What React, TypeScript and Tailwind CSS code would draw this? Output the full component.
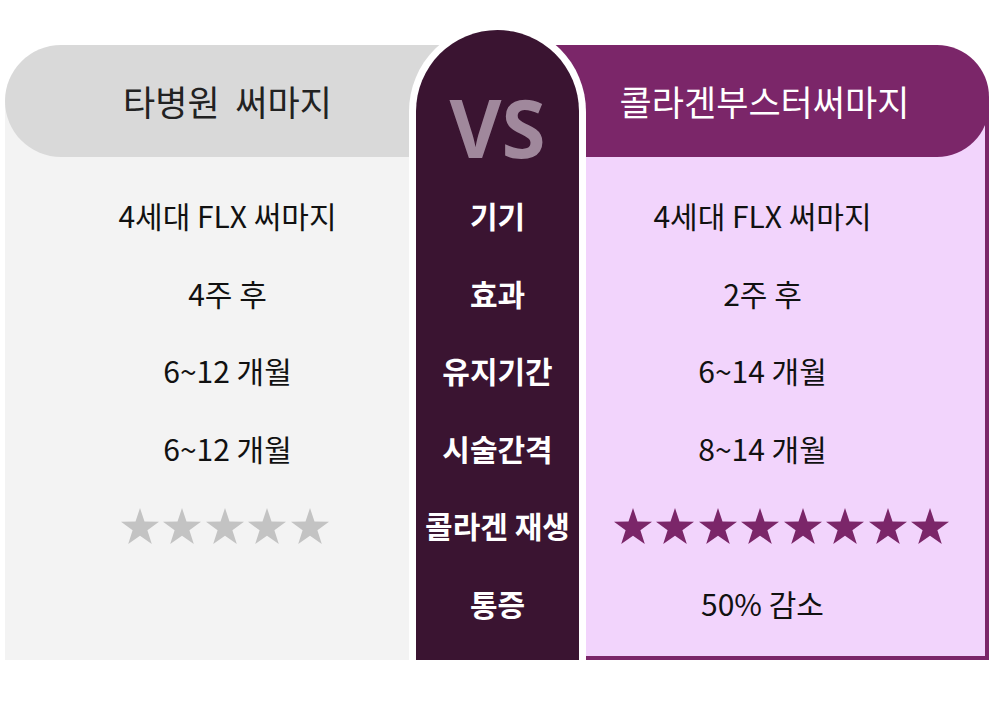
import React from 'react';

const KR = { fontFamily: '"Noto Sans CJK KR", "Noto Sans", sans-serif' };

// simple 5-point star
const Star = ({ color }: { color: string }) => (
  <svg width="38" height="36" viewBox="0 0 38 36">
    <polygon
      points="19,0 23.5,13.5 38,13.7 26.4,22.3 30.8,36 19,27.7 7.2,36 11.6,22.3 0,13.7 14.5,13.5"
      fill={color}
    />
  </svg>
);

const Stars = ({ count, color, className = '' }: { count: number; color: string; className?: string }) => (
  <div className={`flex gap-[4.5px] ${className}`}>
    {Array.from({ length: count }).map((_, i) => (
      <Star key={i} color={color} />
    ))}
  </div>
);

const rows: { left: React.ReactNode; label: string; right: React.ReactNode }[] = [
  { left: '4세대 FLX 써마지', label: '기기', right: '4세대 FLX 써마지' },
  { left: '4주 후', label: '효과', right: '2주 후' },
  { left: '6~12 개월', label: '유지기간', right: '6~14 개월' },
  { left: '6~12 개월', label: '시술간격', right: '8~14 개월' },
  {
    left: <Stars count={5} color="#c3c3c3" className="-ml-[6px]" />,
    label: '콜라겐 재생',
    right: <Stars count={8} color="#7b2669" className="ml-[38px]" />,
  },
  { left: '', label: '통증', right: '50% 감소' },
];

export default function App() {
  return (
    <div className="w-[1000px] h-[710px] bg-white flex items-start pt-[23px] pl-[5px]" style={KR}>
      {/* left: other clinic */}
      <div className="mt-[22px] w-[445px] h-[615px] flex flex-col">
        <div className="relative z-[1] h-[112px] shrink-0 rounded-l-[56px] bg-[#d9d9d9] flex items-center justify-center text-[35px] text-[#222] whitespace-pre">
          타병원  써마지
        </div>
        <div className="-mt-[60px] pt-[80px] flex-1 flex flex-col bg-[#f3f3f3]">
          {rows.map((r, i) => (
            <div key={i} className="h-[77.5px] flex items-center justify-center text-[30px] text-[#111]">
              {r.left}
            </div>
          ))}
        </div>
      </div>

      {/* center labels */}
      <div className="relative z-10 -ml-[41px] w-[177px] h-[637px] shrink-0 border-[7px] border-b-0 border-white rounded-t-full bg-[#3a1431] flex flex-col">
        <div
          className="h-[147px] shrink-0 flex items-end justify-center pb-[10px] text-[80px] font-bold leading-none text-[#a0889c]"
          style={{ fontFamily: '"Open Sans", sans-serif' }}
        >
          VS
        </div>
        {rows.map((r, i) => (
          <div key={i} className="h-[77.5px] flex items-center justify-center text-[30px] font-bold text-white whitespace-nowrap">
            {r.label}
          </div>
        ))}
      </div>

      {/* right: collagen booster */}
      <div className="-ml-[46px] mt-[22px] w-[449px] h-[615px] shrink-0 flex flex-col">
        <div className="relative z-[1] h-[112px] shrink-0 rounded-r-[52px] bg-[#7b2669] flex items-center justify-center text-[35px] text-white">
          콜라겐부스터써마지
        </div>
        <div className="-mt-[60px] pt-[80px] flex-1 flex flex-col bg-[#f2d4fc] border-r-4 border-b-4 border-[#7b2669]">
          {rows.map((r, i) => (
            <div key={i} className="h-[77.5px] flex items-center justify-center text-[30px] text-[#111]">
              {r.right}
            </div>
          ))}
        </div>
      </div>
    </div>
  );
}
